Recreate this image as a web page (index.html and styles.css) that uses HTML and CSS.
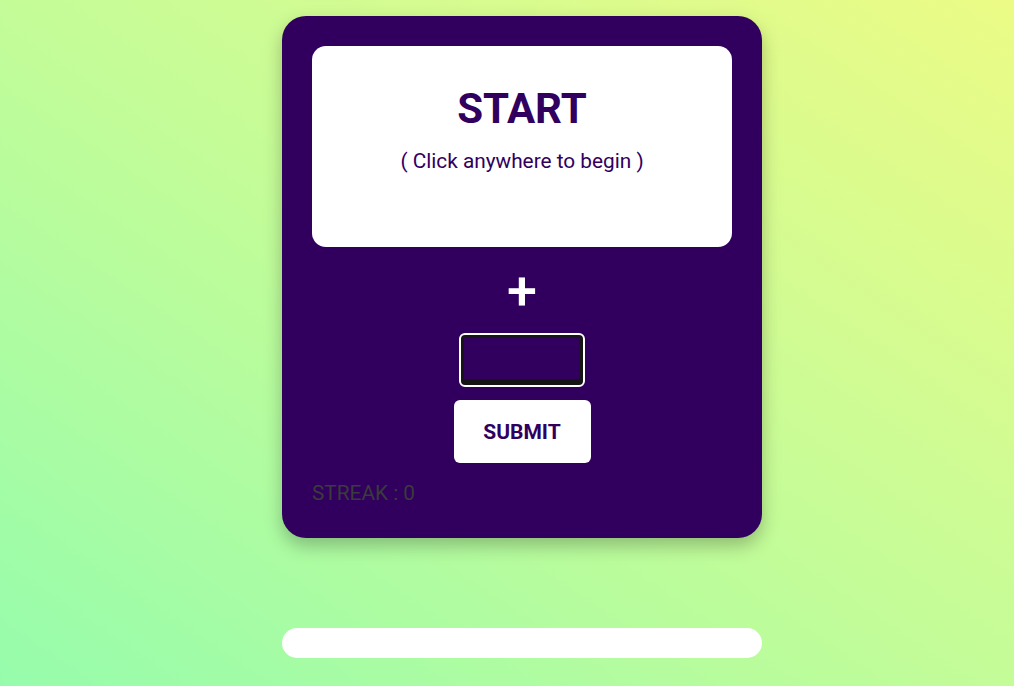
FILE: index.html
```html
<!DOCTYPE html>
<html>
<head>
<meta charset="utf-8">
<link rel="stylesheet" href="styles.css">
</head>
<body>
<main class="page">
  <section class="card">
    <div class="prompt">
      <h1 class="title">START</h1>
      <p class="hint">( Click anywhere to begin )</p>
    </div>
    <div class="op">+</div>
    <input class="answer" type="text">
    <button class="submit">SUBMIT</button>
    <div class="streak">STREAK : 0</div>
  </section>
  <div class="progress"></div>
</main>
</body>
</html>
```
FILE: styles.css
```css
html, body {
  margin: 0;
  height: 100%;
}
body {
  background: linear-gradient(to top right, #96fcac 0%, #c4fc98 50%, #ecfb86 100%);
  font-family: Roboto, "Liberation Sans", sans-serif;
}
.page {
  display: flex;
  flex-direction: column;
  align-items: center;
  padding-top: 16px;
  padding-left: 30px;
}
.card {
  width: 480px;
  box-sizing: border-box;
  background: #31005f;
  border-radius: 24px;
  padding: 30px 30px 33px;
  display: flex;
  flex-direction: column;
  align-items: center;
  box-shadow: 0 8px 18px rgba(0, 0, 0, 0.25);
}
.prompt {
  width: 100%;
  height: 201px;
  box-sizing: border-box;
  background: #fff;
  border-radius: 14px;
  color: #31005f;
  text-align: center;
  padding-top: 38px;
}
.title {
  margin: 0;
  font-size: 42px;
  font-weight: 700;
  line-height: 50px;
}
.hint {
  margin: 15px 0 0;
  font-size: 20.8px;
  line-height: 24px;
}
.op {
  color: #fff;
  font-size: 54px;
  font-weight: 500;
  line-height: 56px;
  margin-top: 16px;
}
.answer {
  width: 126px;
  height: 54px;
  box-sizing: border-box;
  margin-top: 14px;
  background: #31005f;
  border: 2px solid #fff;
  border-radius: 6px;
  box-shadow: inset 0 0 0 3px #151515, inset 0 -3px 0 3px #151515;
  outline: none;
}
.submit {
  margin-top: 13px;
  width: 137px;
  height: 63px;
  background: #fff;
  border: none;
  border-radius: 6px;
  color: #31005f;
  font-family: Roboto, "Liberation Sans", sans-serif;
  font-size: 21px;
  font-weight: 700;
}
.streak {
  align-self: flex-start;
  margin-top: 18px;
  color: #3b3b3b;
  font-size: 20.8px;
  line-height: 24px;
}
.progress {
  margin-top: 90px;
  width: 480px;
  height: 30px;
  background: #fff;
  border-radius: 15px;
}
```
